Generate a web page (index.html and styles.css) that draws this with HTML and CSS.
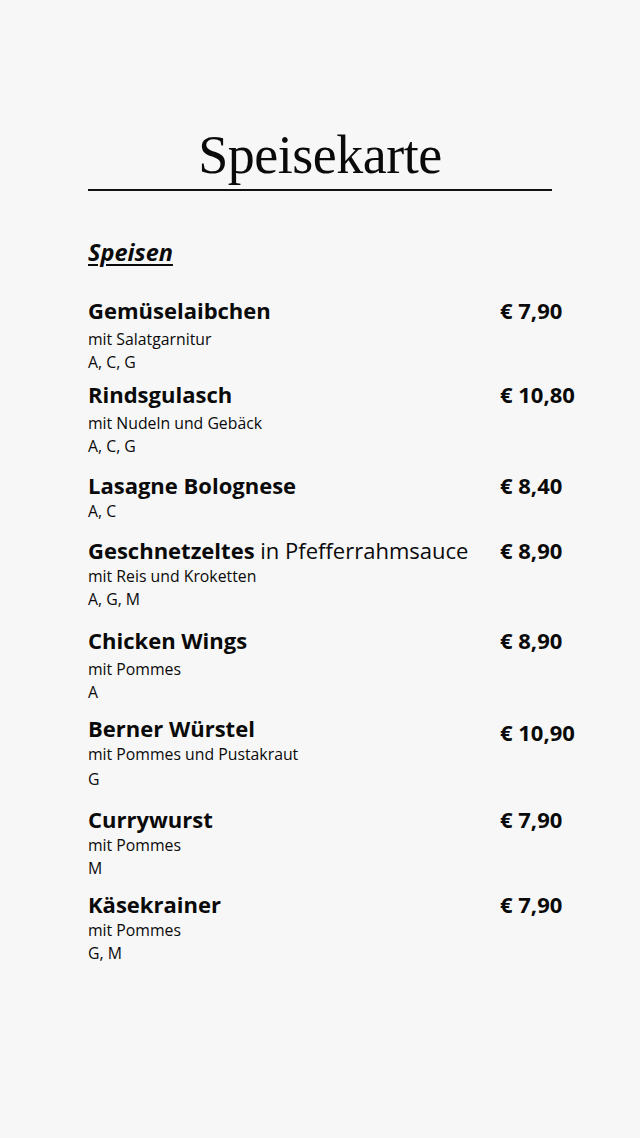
FILE: index.html
```html
<!DOCTYPE html>
<html lang="de">
<head>
<meta charset="utf-8">
<title>Speisekarte</title>
<link rel="stylesheet" href="styles.css">
</head>
<body>
<main class="menu">
  <h1 class="title">Speisekarte</h1>
  <hr class="rule">
  <h2 class="section">Speisen</h2>
  <ul class="items">
    <li class="item">
      <div class="info">
        <div class="name">Gemüselaibchen</div>
        <div class="desc loose">mit Salatgarnitur</div>
        <div class="allergens">A, C, G</div>
      </div>
      <div class="price">€ 7,90</div>
    </li>
    <li class="item close">
      <div class="info">
        <div class="name">Rindsgulasch</div>
        <div class="desc loose">mit Nudeln und Gebäck</div>
        <div class="allergens">A, C, G</div>
      </div>
      <div class="price">€ 10,80</div>
    </li>
    <li class="item">
      <div class="info">
        <div class="name">Lasagne Bolognese</div>
        <div class="allergens">A, C</div>
      </div>
      <div class="price">€ 8,40</div>
    </li>
    <li class="item">
      <div class="info">
        <div class="name">Geschnetzeltes <span class="plain">in Pfefferrahmsauce</span></div>
        <div class="desc">mit Reis und Kroketten</div>
        <div class="allergens">A, G, M</div>
      </div>
      <div class="price">€ 8,90</div>
    </li>
    <li class="item wide">
      <div class="info">
        <div class="name">Chicken Wings</div>
        <div class="desc loose">mit Pommes</div>
        <div class="allergens">A</div>
      </div>
      <div class="price">€ 8,90</div>
    </li>
    <li class="item narrow">
      <div class="info">
        <div class="name">Berner Würstel</div>
        <div class="desc">mit Pommes und Pustakraut</div>
        <div class="allergens loose">G</div>
      </div>
      <div class="price low">€ 10,90</div>
    </li>
    <li class="item roomy">
      <div class="info">
        <div class="name">Currywurst</div>
        <div class="desc">mit Pommes</div>
        <div class="allergens">M</div>
      </div>
      <div class="price">€ 7,90</div>
    </li>
    <li class="item narrow">
      <div class="info">
        <div class="name">Käsekrainer</div>
        <div class="desc">mit Pommes</div>
        <div class="allergens">G, M</div>
      </div>
      <div class="price">€ 7,90</div>
    </li>
  </ul>
</main>
</body>
</html>
```
FILE: styles.css
```css
html, body {
  margin: 0;
  padding: 0;
  background: #f7f7f7;
}
body {
  font-family: "Open Sans", "Noto Sans", sans-serif;
  color: #0a0a0a;
}
.menu {
  padding: 123px 0 0 88px;
  width: 464px;
}
.title {
  margin: 0;
  font-family: "Liberation Serif", serif;
  font-weight: 400;
  font-size: 54px;
  line-height: 64px;
  text-align: center;
  letter-spacing: -0.5px;
}
.rule {
  margin: 2px 0 0;
  border: 0;
  height: 2px;
  background: #111;
}
.section {
  margin: 46px 0 0;
  font-size: 23.5px;
  line-height: 30px;
  font-weight: 700;
  font-style: italic;
  text-decoration: underline;
  text-decoration-thickness: 2px;
  text-underline-offset: 3px;
}
.items {
  list-style: none;
  margin: 28px 0 0;
  padding: 0;
  width: 560px;
}
.item {
  display: grid;
  grid-template-columns: 412px auto;
  margin-top: 12px;
}
.item:first-child { margin-top: 0; }
.item.close { margin-top: 5px; }
.item.wide { margin-top: 14px; }
.item.roomy { margin-top: 13px; }
.item.narrow { margin-top: 9px; }
.name {
  font-size: 22px;
  font-weight: 700;
  line-height: 30px;
  white-space: nowrap;
}
.plain { font-weight: 400; }
.desc, .allergens {
  font-size: 15.8px;
  line-height: 23px;
}
.desc.loose { margin-top: 3px; }
.allergens.loose { margin-top: 2px; }
.price {
  font-size: 22px;
  font-weight: 700;
  line-height: 30px;
}
.price.low { margin-top: 4px; }
```
